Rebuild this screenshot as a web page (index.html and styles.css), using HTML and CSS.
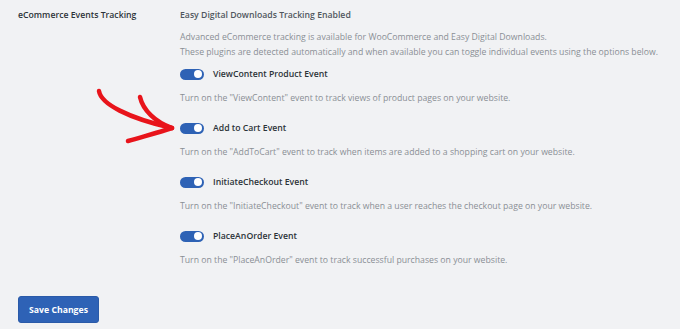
FILE: index.html
```html
<!DOCTYPE html>
<html>
<head>
<meta charset="utf-8">
<link rel="stylesheet" href="styles.css">
</head>
<body>
<div class="page">
  <div class="row">
    <div class="label">eCommerce Events Tracking</div>
    <div class="field">
      <div class="status">Easy Digital Downloads Tracking Enabled</div>
      <p class="intro">Advanced eCommerce tracking is available for WooCommerce and Easy Digital Downloads.<br>These plugins are detected automatically and when available you can toggle individual events using the options below.</p>
      <div class="event">
        <div class="toggle-line"><span class="toggle"></span><span class="title">ViewContent Product Event</span></div>
        <div class="desc">Turn on the "ViewContent" event to track views of product pages on your website.</div>
      </div>
      <div class="event">
        <div class="toggle-line"><span class="toggle"></span><span class="title">Add to Cart Event</span></div>
        <div class="desc">Turn on the "AddToCart" event to track when items are added to a shopping cart on your website.</div>
      </div>
      <div class="event">
        <div class="toggle-line"><span class="toggle"></span><span class="title">InitiateCheckout Event</span></div>
        <div class="desc">Turn on the "InitiateCheckout" event to track when a user reaches the checkout page on your website.</div>
      </div>
      <div class="event">
        <div class="toggle-line"><span class="toggle"></span><span class="title">PlaceAnOrder Event</span></div>
        <div class="desc">Turn on the "PlaceAnOrder" event to track successful purchases on your website.</div>
      </div>
    </div>
  </div>
  <button class="save">Save Changes</button>
  <svg class="arrow" width="680" height="329" viewBox="0 0 680 329">
    <g fill="none" stroke="#e8141b" stroke-width="4.5" stroke-linecap="round" stroke-linejoin="round">
      <path d="M99 91 C101 104 128 118 172 128"/>
      <path d="M140 97 C143 110 155 122 172 128"/>
      <path d="M172 128 C160 132 145 136 128 141"/>
    </g>
  </svg>
</div>
</body>
</html>
```

FILE: styles.css
```css
html, body {
  margin: 0;
  padding: 0;
  background: #f1f2f4;
}
body {
  font-family: "Open Sans", "Noto Sans", sans-serif;
  font-size: 8.7px;
  color: #50575e;
}
.page {
  position: relative;
  width: 680px;
  height: 329px;
  overflow: hidden;
}
.row {
  display: flex;
  padding-top: 7px;
}
.label {
  width: 162px;
  padding-left: 18px;
  font-weight: 600;
  color: #2c3338;
  line-height: 16px;
  white-space: nowrap;
}
.field {
  flex: 1;
  white-space: nowrap;
}
.status {
  font-weight: 600;
  color: #50575e;
  line-height: 16px;
}
.intro {
  margin: 6.5px 0 0;
  line-height: 15px;
  color: #8a8f94;
}
.event {
  margin-top: 6.5px;
}
.event + .event {
  margin-top: 14px;
}
.toggle-line {
  display: flex;
  align-items: center;
  gap: 9px;
  height: 16px;
}
.toggle {
  position: relative;
  width: 24px;
  height: 11px;
  border-radius: 6px;
  background: #2e62b5;
}
.toggle::after {
  content: "";
  position: absolute;
  right: 2px;
  top: 1.5px;
  width: 8px;
  height: 8px;
  border-radius: 50%;
  background: #fff;
}
.title {
  font-weight: 600;
  color: #2c3338;
}
.desc {
  margin-top: 8px;
  line-height: 16px;
  color: #8a8f94;
}
.save {
  display: block;
  margin: 28px 0 0 18px;
  width: 81px;
  height: 27px;
  padding: 0;
  border: 1px solid #2a5aa8;
  border-radius: 3px;
  background: #2e62b6;
  color: #fff;
  font-family: "Open Sans", "Noto Sans", sans-serif;
  font-size: 8.7px;
  font-weight: 700;
}
.arrow {
  position: absolute;
  left: 0;
  top: 0;
  pointer-events: none;
}
```
